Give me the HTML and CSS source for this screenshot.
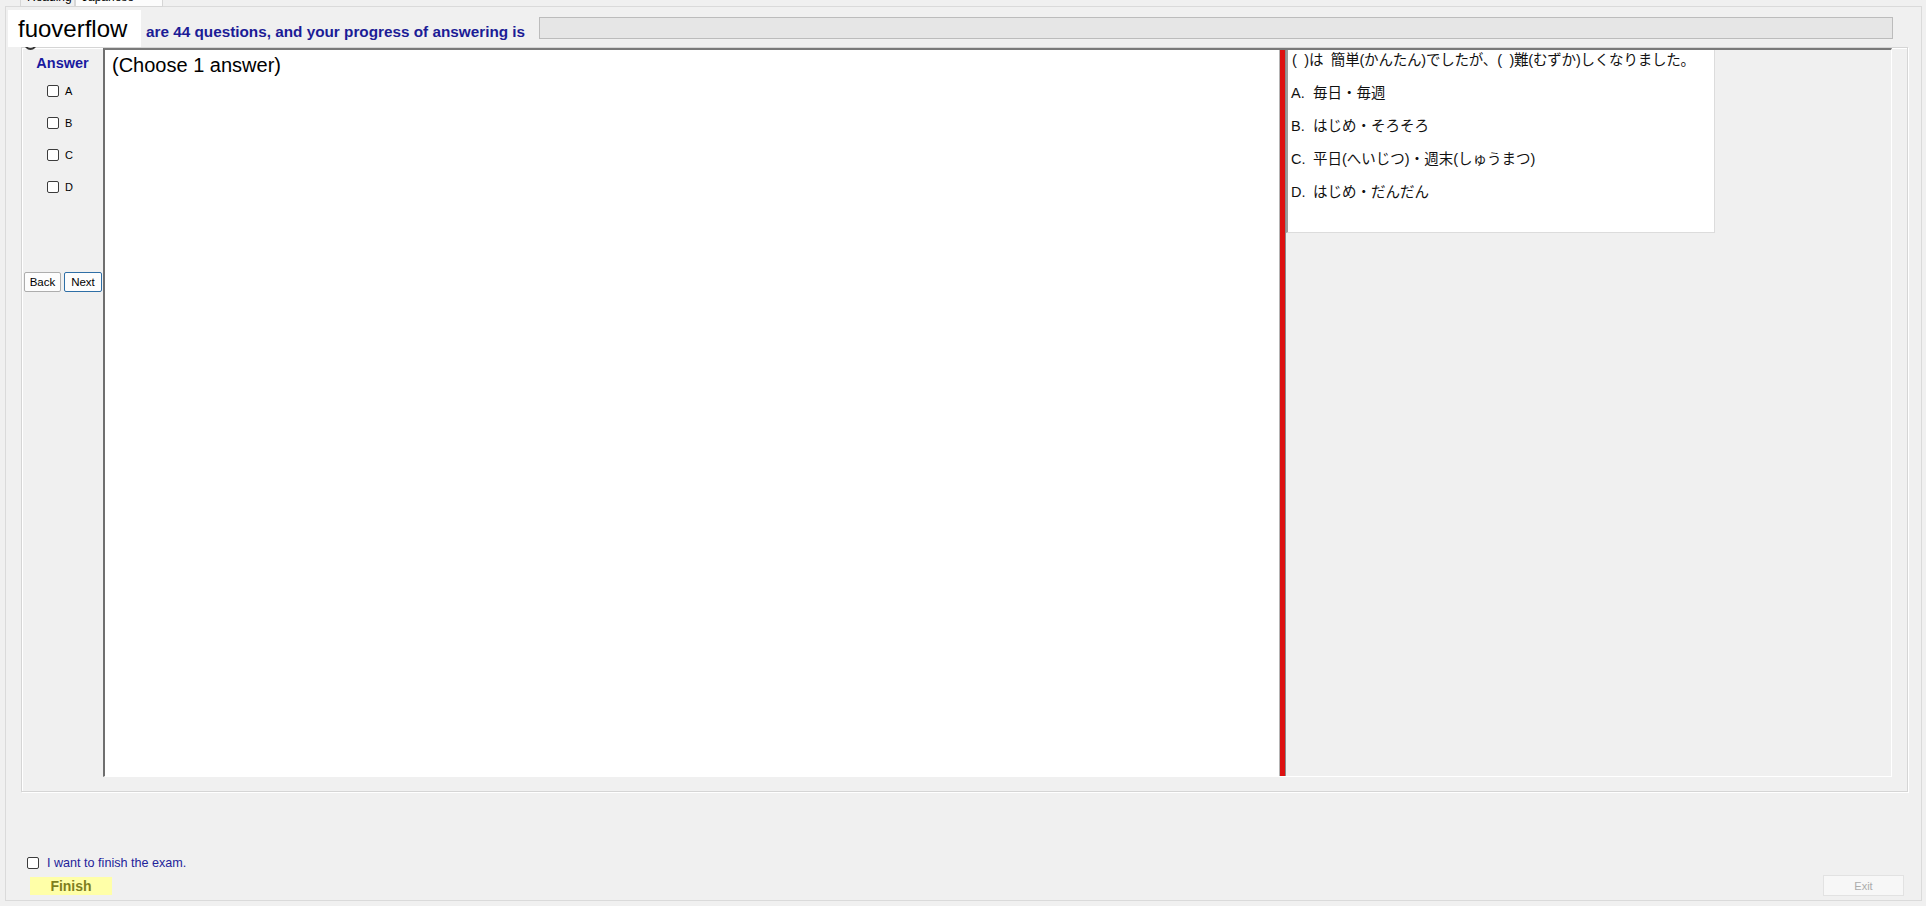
FILE: index.html
```
<!DOCTYPE html>
<html>
<head>
<meta charset="utf-8">
<title>Exam</title>
<link rel="stylesheet" href="styles.css">
</head>
<body>
<div class="tabstrip">
  <div class="tab tab1"><span>Reading</span></div>
  <div class="tab tab2"><span>Japanese</span></div>
</div>
<div class="page">
  <div class="header">
    <div class="info">are 44 questions, and your progress of answering is</div>
    <div class="progress"></div>
  </div>
  <div class="groupbox">
    <div class="answers">
      <div class="answers-title">Answer</div>
      <label class="opt"><span class="cb"></span><span>A</span></label>
      <label class="opt"><span class="cb"></span><span>B</span></label>
      <label class="opt"><span class="cb"></span><span>C</span></label>
      <label class="opt"><span class="cb"></span><span>D</span></label>
      <div class="nav">
        <button class="btn back">Back</button>
        <button class="btn next">Next</button>
      </div>
    </div>
    <div class="split">
      <div class="qpanel">(Choose 1 answer)</div>
      <div class="splitter"></div>
      <div class="rpanel">
        <div class="choices">
          <div class="line first">(&nbsp;&nbsp;)は&nbsp;&nbsp;簡単(かんたん)でしたが、(&nbsp;&nbsp;)難(むずか)しくなりました。</div>
          <div class="line"><span class="k">A.</span>毎日・毎週</div>
          <div class="line"><span class="k">B.</span>はじめ・そろそろ</div>
          <div class="line"><span class="k">C.</span>平日(へいじつ)・週末(しゅうまつ)</div>
          <div class="line"><span class="k">D.</span>はじめ・だんだん</div>
        </div>
      </div>
    </div>
  </div>
  <div class="footer">
    <div class="footer-left">
      <label class="finish-row"><span class="cb"></span><span>I want to finish the exam.</span></label>
      <button class="finish">Finish</button>
    </div>
    <button class="exit">Exit</button>
  </div>
</div>
<div class="peek"></div>
<div class="brand">fuoverflow</div>
</body>
</html>
```
FILE: styles.css
```
* { box-sizing: border-box; }
html, body { margin: 0; padding: 0; }
body {
  width: 1926px;
  height: 906px;
  overflow: hidden;
  position: relative;
  background: #f0f0f0;
  font-family: "Liberation Sans", Arial, sans-serif;
  color: #000;
}
.tabstrip {
  height: 6px;
  display: flex;
  padding-left: 20px;
}
.tab {
  height: 7px;
  overflow: hidden;
  border: 1px solid #d6d6d6;
  border-top: none;
  font-size: 12px;
  line-height: 12px;
  background: #f0f0f0;
}
.tab span { display: block; margin-top: -9px; padding-left: 6px; }
.tab1 { width: 55px; }
.tab2 { width: 88px; background: #fcfcfc; }

.page {
  margin: 0 4px 0 5px;
  height: 895px;
  border: 1px solid #dadada;
  display: flex;
  flex-direction: column;
}
.header {
  margin-top: 10px;
  height: 22px;
  display: flex;
  align-items: center;
  padding-left: 140px;
  padding-right: 28px;
}
.info {
  font-weight: bold;
  font-size: 15.3px;
  color: #1c1c96;
  white-space: nowrap;
  padding-top: 8px;
}
.progress {
  flex: 1;
  height: 22px;
  margin-left: 14px;
  background: #e6e6e6;
  border: 1px solid #bcbcbc;
}
.groupbox {
  margin: 8px 13px 0 15px;
  height: 745px;
  border: 1px solid #d5d5d5;
  box-shadow: inset 1px 1px 0 #fff, 1px 1px 0 #fff;
  display: flex;
  padding: 0 15px 14px 0;
}
.answers {
  width: 81px;
  padding-top: 7px;
  display: flex;
  flex-direction: column;
}
.answers-title {
  font-weight: bold;
  font-size: 14.5px;
  line-height: 17px;
  color: #1a1aa0;
  text-align: center;
  margin-bottom: 3px;
}
.opt {
  height: 32px;
  display: flex;
  align-items: center;
  gap: 6px;
  padding-left: 25px;
  font-size: 11px;
}
.cb {
  display: inline-block;
  width: 12px;
  height: 12px;
  border: 1px solid #3c3c3c;
  border-radius: 2px;
  background: #fff;
}
.nav {
  margin-top: 69px;
  display: flex;
  gap: 3px;
  padding-left: 2px;
}
.btn {
  height: 20px;
  padding: 0;
  font-family: "Liberation Sans", Arial, sans-serif;
  font-size: 11.5px;
  background: #fdfdfd;
  border: 1px solid #adadad;
  border-radius: 2px;
  color: #000;
}
.back { width: 37px; }
.next { width: 38px; border-color: #2f6fa6; }

.split {
  flex: 1;
  display: flex;
  border-top: 2px solid #7a7a7a;
  border-left: 2px solid #6f6f6f;
  border-right: 1px solid #fff;
  border-bottom: 1px solid #fff;
}
.qpanel {
  width: 1174px;
  background: #fff;
  padding: 3px 7px;
  font-size: 20px;
  line-height: 24px;
}
.splitter {
  width: 7px;
  background: #dd1111;
  border-left: 1px solid #b4b4b4;
  border-right: 1px solid #8a8a8a;
}
.rpanel {
  flex: 1;
  background: #f0f0f0;
}
.choices {
  width: 429px;
  height: 183px;
  background: #fff;
  border-left: 2px solid #9c9c9c;
  border-right: 1px solid #dcdcdc;
  border-bottom: 1px solid #dcdcdc;
  overflow: hidden;
  padding-left: 3px;
}
.line {
  height: 33px;
  line-height: 33px;
  font-family: "Liberation Sans", "Noto Sans CJK JP", sans-serif;
  font-size: 14.5px;
  white-space: nowrap;
  color: #111;
}
.line.first { margin-top: -6px; padding-left: 1px; letter-spacing: -0.2px; }
.k { display: inline-block; width: 22px; }

.footer {
  margin-top: auto;
  display: flex;
  justify-content: space-between;
  align-items: flex-end;
  padding: 0 17px 5px 21px;
}
.footer-left { display: flex; flex-direction: column; }
.finish-row {
  height: 16px;
  display: flex;
  align-items: center;
  gap: 8px;
  font-size: 12.6px;
  color: #23239a;
  margin-bottom: 6px;
}
.finish {
  margin-left: 3px;
  width: 82px;
  height: 18px;
  padding: 0;
  border: none;
  background: #ffffa8;
  color: #7f7f1e;
  font-family: "Liberation Sans", Arial, sans-serif;
  font-weight: bold;
  font-size: 14px;
}
.exit {
  width: 81px;
  height: 21px;
  margin-bottom: -1px;
  padding: 0;
  background: #f7f7f7;
  border: 1px solid #e2e2e2;
  color: #acacac;
  font-family: "Liberation Sans", Arial, sans-serif;
  font-size: 11px;
}
.peek {
  position: absolute;
  left: 24px;
  top: 37px;
  width: 13px;
  height: 13px;
  border: 2px solid #333;
  border-radius: 50%;
}
.brand {
  position: absolute;
  left: 8px;
  top: 10px;
  width: 133px;
  height: 37px;
  background: #fff;
  padding-left: 10px;
  font-size: 24px;
  line-height: 38px;
  color: #000;
}
```
